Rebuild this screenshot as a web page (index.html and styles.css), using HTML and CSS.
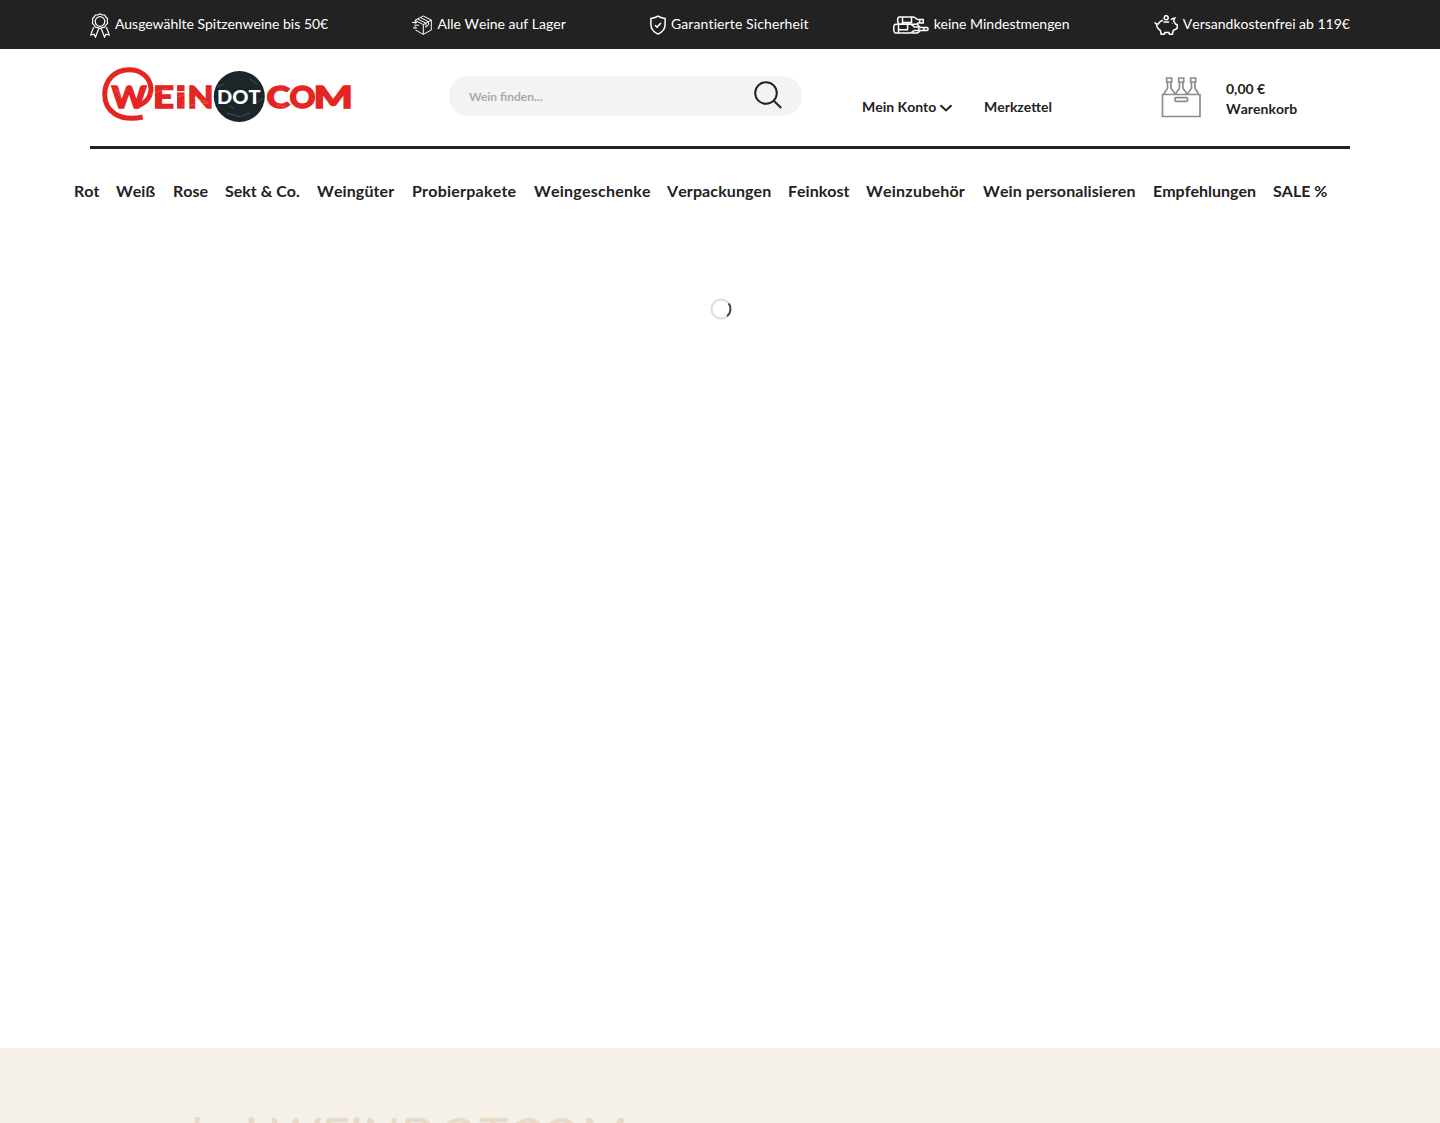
FILE: index.html
```
<!DOCTYPE html>
<html lang="de">
<head>
    <meta charset="utf-8">
    <title>WEiNDOTCOM</title>
    <link rel="stylesheet" href="styles.css">
</head>
<body>
    <div class="usp-bar">
        <ul class="usp-list container">
            <li class="kerned">
                <svg width="20" height="25" viewBox="0 0 20 25">
                    <path d="M10 .8l2.200 1 2.400.2 1.200 2 1.700 1.600-.3 2.400.4 2.400-1.800 1.700-1.200 2.100-2.400.4-2.200 1-2.200-1-2.400-.4-1.200-2.100-1.800-1.700.4-2.400-.3-2.400L4.200 4l1.200-2 2.400-.2z"/>
                    <circle cx="10" cy="8.500" r="4.800"/>
                    <path d="M3.600 14.200L.7 22l3.200-.8 1.600 2.800L8.800 15.500M16.400 14.200L19.300 22l-3.200-.8-1.600 2.800-3.300-8.500"/>
                </svg>
                <span>Ausgewählte Spitzenweine bis 50€</span>
            </li>
            <li>
                <svg class="thin" width="20" height="20" viewBox="0 0 20 20">
                    <path d="M3 5.300L11.300 1l8 4v10l-8 4.400L3.500 15M3 5.300l8.300 4.300 8-4.600M11.300 9.600v9.800M5.800 4l8.200 4.300v4l2.500-2.500V7M8.500 2.500l8 4.300M3.200 5.300v3.500M3.200 11.500V13M0 7.500h5M2 10.200h5M1 13h4"/>
                </svg>
                <span>Alle Weine auf Lager</span>
            </li>
            <li class="spaced">
                <svg class="bold" width="16" height="20" viewBox="0 0 16 20">
                    <path d="M8 1.200C6 2.700 3.500 3.200.9 3.400v6.200c0 4.600 3 7.700 7.100 9.500 4.100-1.800 7.100-4.900 7.100-9.500V3.400C12.500 3.200 10 2.700 8 1.200z"/>
                    <path d="M5 10.200l2 1.900 4-4.200"/>
                </svg>
                <span>Garantierte Sicherheit</span>
            </li>
            <li class="kerned">
                <svg class="bold" width="36" height="18" viewBox="0 0 36 18">
                    <path d="M6.500 8.200C4 7.500 4 .9 6.500.9h14c1.800 0 2.600 2.200 4.100 2.600h5.600v3.400h-5c-1 0-1.300 1.300-2.700 1.300zM9.500.9v7.300M18.500.9v5.600h-9M26.700 3.500v3.400"/>
                    <path d="M2.600 17.100c-2.500-.7-2.500-8.900 0-8.900h14.800c1.500 0 2.500 2.300 4 2.800h4.500v3.500h-4.500c-1.600.2-2.500 2.600-4 2.600zM5.500 8.200v8.900M14.600 8.200v5.600H5.500"/>
                    <path d="M18.500 17.100h5c2 0 2.800-2.200 4-2.500h6.500q1 0 1-1v-1.200q0-1-1-1h-6.500c-1.200-.3-2-3.200-4-3.200M31 11.400v3.200"/>
                </svg>
                <span>keine Mindestmengen</span>
            </li>
            <li>
                <svg class="bold" width="24" height="20" viewBox="0 0 24 20">
                    <circle cx="12.200" cy="2.700" r="2"/>
                    <path d="M.5 7.500l2.200 1.600 1.600-.1c.8-2 2.600-3.200 4.600-3.700M2.200 8c.2 3.500 1.600 5.800 4.200 7.500l.8 3.700h3l.7-1.800h4l.6 1.800h2.900l.8-3.700 3.800-2 .4-3.800-2-.8c-.4-1.300-1-2.200-1.800-2.900l1.200-3c-1.700.2-3 .8-4 1.800M9.500 7h5.600M18.500 8.500v.5"/>
                </svg>
                <span>Versandkostenfrei ab 119€</span>
            </li>
        </ul>
    </div>

    <header class="header container">
        <a class="logo" href="#">
            <svg width="250" height="57" viewBox="0 0 250 57">
                <path class="logo-ring" d="M34 39C42 38 49 31 49 21.500 48 9 38 2.700 27 2.700 12 2.700 2.700 14 2.700 27.500 2.700 44 17 55 40.700 50"/>
                <g class="logo-red">
                    <text x="9.500" y="41" textLength="35" lengthAdjust="spacingAndGlyphs">W</text>
                    <text x="51" y="41" textLength="21" lengthAdjust="spacingAndGlyphs">E</text>
                    <text x="85.500" y="41" textLength="26" lengthAdjust="spacingAndGlyphs">N</text>
                    <text x="164.500" y="41" textLength="23.500" lengthAdjust="spacingAndGlyphs">C</text>
                    <text x="187.500" y="41" textLength="26" lengthAdjust="spacingAndGlyphs">O</text>
                    <text x="211.500" y="41" textLength="39.500" lengthAdjust="spacingAndGlyphs">M</text>
                    <rect x="75.700" y="26" width="6.200" height="15"/>
                    <rect x="75.700" y="18.800" width="6.200" height="4.700"/>
                </g>
                <circle cx="137.300" cy="29.500" r="25.500" fill="#1b262b"/>
                <text class="logo-dot" x="115" y="36.500" textLength="43.500" lengthAdjust="spacingAndGlyphs">DOT</text>
                <path class="logo-scratch" d="M49 27l17-6M74 30l9-2M80 39l27-3M91 31l15 4M115 20l7-3M148 12l7 5M125 46l14 4M140 49l8-3M154 36l7-5M175 38l9 2M128 39l4 3M14 22l5 9"/>
            </svg>
        </a>
        <form class="search">
            <input type="text" placeholder="Wein finden...">
            <button type="button" aria-label="Suchen">
                <svg width="30" height="30" viewBox="0 0 30 30">
                    <circle cx="13" cy="13" r="10.800"/>
                    <path d="M20.800 20.800l7.400 7.200"/>
                </svg>
            </button>
        </form>
        <div class="account">
            <a href="#">Mein Konto<svg width="14" height="8" viewBox="0 0 14 8"><path d="M1.500 1.200L7 6.400l5.500-5.200"/></svg></a>
            <a href="#">Merkzettel</a>
        </div>
        <a class="cart" href="#">
            <svg width="40" height="41" viewBox="0 0 40 41">
                <path d="M1.500 17.500H39V39.500H1.500z"/>
                <rect x="14" y="20.700" width="12.600" height="3.600" rx="1"/>
                <path d="M5.700 1h5v4h-5zM17.700 1h5v4h-5zM29.700 1h5v4h-5z"/>
                <path d="M6.500 5v6c0 2-3.300 2.500-3.300 6.500M9.900 5v6c0 2 3.700 2.500 3.700 6.500M18.500 5v6c0 2-3.700 2.500-3.700 6.500M21.900 5v6c0 2 3.700 2.500 3.700 6.500M30.500 5v6c0 2-3.700 2.500-3.700 6.500M33.900 5v6c0 2 3.300 2.500 3.300 6.500"/>
            </svg>
            <span>0,00&nbsp;€<br>Warenkorb</span>
        </a>
    </header>

    <nav class="main-nav">
        <a href="#">Rot</a>
        <a href="#">Weiß</a>
        <a href="#">Rose</a>
        <a href="#">Sekt &amp; Co.</a>
        <a class="spaced" href="#">Weingüter</a>
        <a class="wide" href="#">Probierpakete</a>
        <a class="wide" href="#">Weingeschenke</a>
        <a class="spaced" href="#">Verpackungen</a>
        <a href="#">Feinkost</a>
        <a class="wide" href="#">Weinzubehör</a>
        <a class="spaced" href="#">Wein personalisieren</a>
        <a href="#">Empfehlungen</a>
        <a href="#">SALE %</a>
    </nav>

    <main class="slider">
        <svg width="22" height="22" viewBox="0 0 22 22">
            <circle class="spinner-track" cx="11" cy="11" r="9.500"/>
            <path class="spinner-head" d="M18.700 5.400A9.500 9.500 0 0 1 17.100 18.300"/>
        </svg>
    </main>

    <section class="intro">
        <h2>bei WEiNDOTCOM</h2>
    </section>
</body>
</html>
```
FILE: styles.css
```
* {
    box-sizing: border-box;
}
body {
    margin: 0;
    height: 1123px;
    overflow: hidden;
    background: #fff;
    color: #222;
    font-family: Lato, sans-serif;
    font-size: 14px;
    font-kerning: none;
}
a {
    color: inherit;
    text-decoration: none;
}
svg {
    display: block;
    flex-shrink: 0;
    fill: none;
}
.container {
    width: 1260px;
    margin: 0 auto;
}
.kerned {
    font-kerning: normal;
}
.spaced {
    letter-spacing: 0.1px;
}
.wide {
    letter-spacing: 0.22px;
}
.usp-bar {
    height: 49px;
    background: #222;
    color: #fff;
}
.usp-list {
    display: flex;
    justify-content: space-between;
    height: 49px;
    padding: 0;
    list-style: none;
}
.usp-list li {
    display: flex;
    align-items: center;
    gap: 5px;
}
.usp-list span {
    padding-bottom: 2px;
}
.usp-list svg {
    margin-top: 1px;
    stroke: #fff;
    stroke-width: 1.2;
}
.usp-list .thin {
    stroke-width: 1;
}
.usp-list .bold {
    stroke-width: 1.5;
}
.header {
    display: flex;
    height: 100px;
    border-bottom: 3px solid #222;
    font-weight: 700;
}
.logo {
    width: 359px;
    padding: 18px 0 0 12px;
}
.logo-ring {
    stroke: #e52521;
    stroke-width: 5;
}
.logo-red {
    fill: #e52521;
    stroke: #e52521;
    stroke-width: 1.3;
    font-size: 31px;
    font-weight: 900;
}
.logo-dot {
    fill: #fff;
    font-size: 18.5px;
    font-weight: 900;
}
.logo-scratch {
    stroke: #fff;
    stroke-width: 0.5;
    opacity: 0.4;
}
.search {
    display: flex;
    width: 353px;
    height: 40px;
    margin-top: 27px;
    padding: 0 19px 0 20px;
    border-radius: 20px;
    background: #f3f3f3;
}
.search input {
    flex: 1;
    min-width: 0;
    padding: 0;
    border: 0;
    background: none;
    font: 700 12px Lato, sans-serif;
}
.search input::placeholder {
    color: #aaa;
}
.search button {
    padding: 0 0 2px;
    border: 0;
    background: none;
}
.search svg {
    stroke: #222;
    stroke-width: 2;
}
.account {
    display: flex;
    gap: 31px;
    width: 300px;
    padding: 49px 0 0 60px;
}
.account a {
    display: flex;
    height: 18px;
    line-height: 18px;
}
.account svg {
    margin: 6px 0 0 2.6px;
    stroke: #222;
    stroke-width: 2;
}
.cart {
    display: flex;
    gap: 25px;
    padding: 28px 0 0 59px;
    line-height: 20px;
}
.cart span {
    padding-top: 2px;
}
.cart svg {
    stroke: #8c8c8c;
    stroke-width: 1.7;
}
.main-nav {
    display: grid;
    grid-template-columns: 42px 57px 52px 92px 95px 122px 133px 121px 78px 117px 170px 120px auto;
    height: 84px;
    padding: 32px 0 0 74px;
    font-size: 16px;
    font-weight: 700;
    line-height: 20px;
    white-space: nowrap;
}
.slider {
    display: flex;
    justify-content: center;
    height: 815px;
    padding: 64.5px 0 0 1px;
}
.spinner-track {
    stroke: #ddd;
    stroke-width: 2;
}
.spinner-head {
    stroke: #444;
    stroke-width: 2;
}
.intro {
    height: 75px;
    padding: 58px 0 0 189px;
    overflow: hidden;
    background: #f5f0e8;
}
.intro h2 {
    margin: 0;
    color: #e8dac5;
    font-size: 53.7px;
    font-style: italic;
    font-weight: 400;
    line-height: 60px;
    white-space: nowrap;
}
```
